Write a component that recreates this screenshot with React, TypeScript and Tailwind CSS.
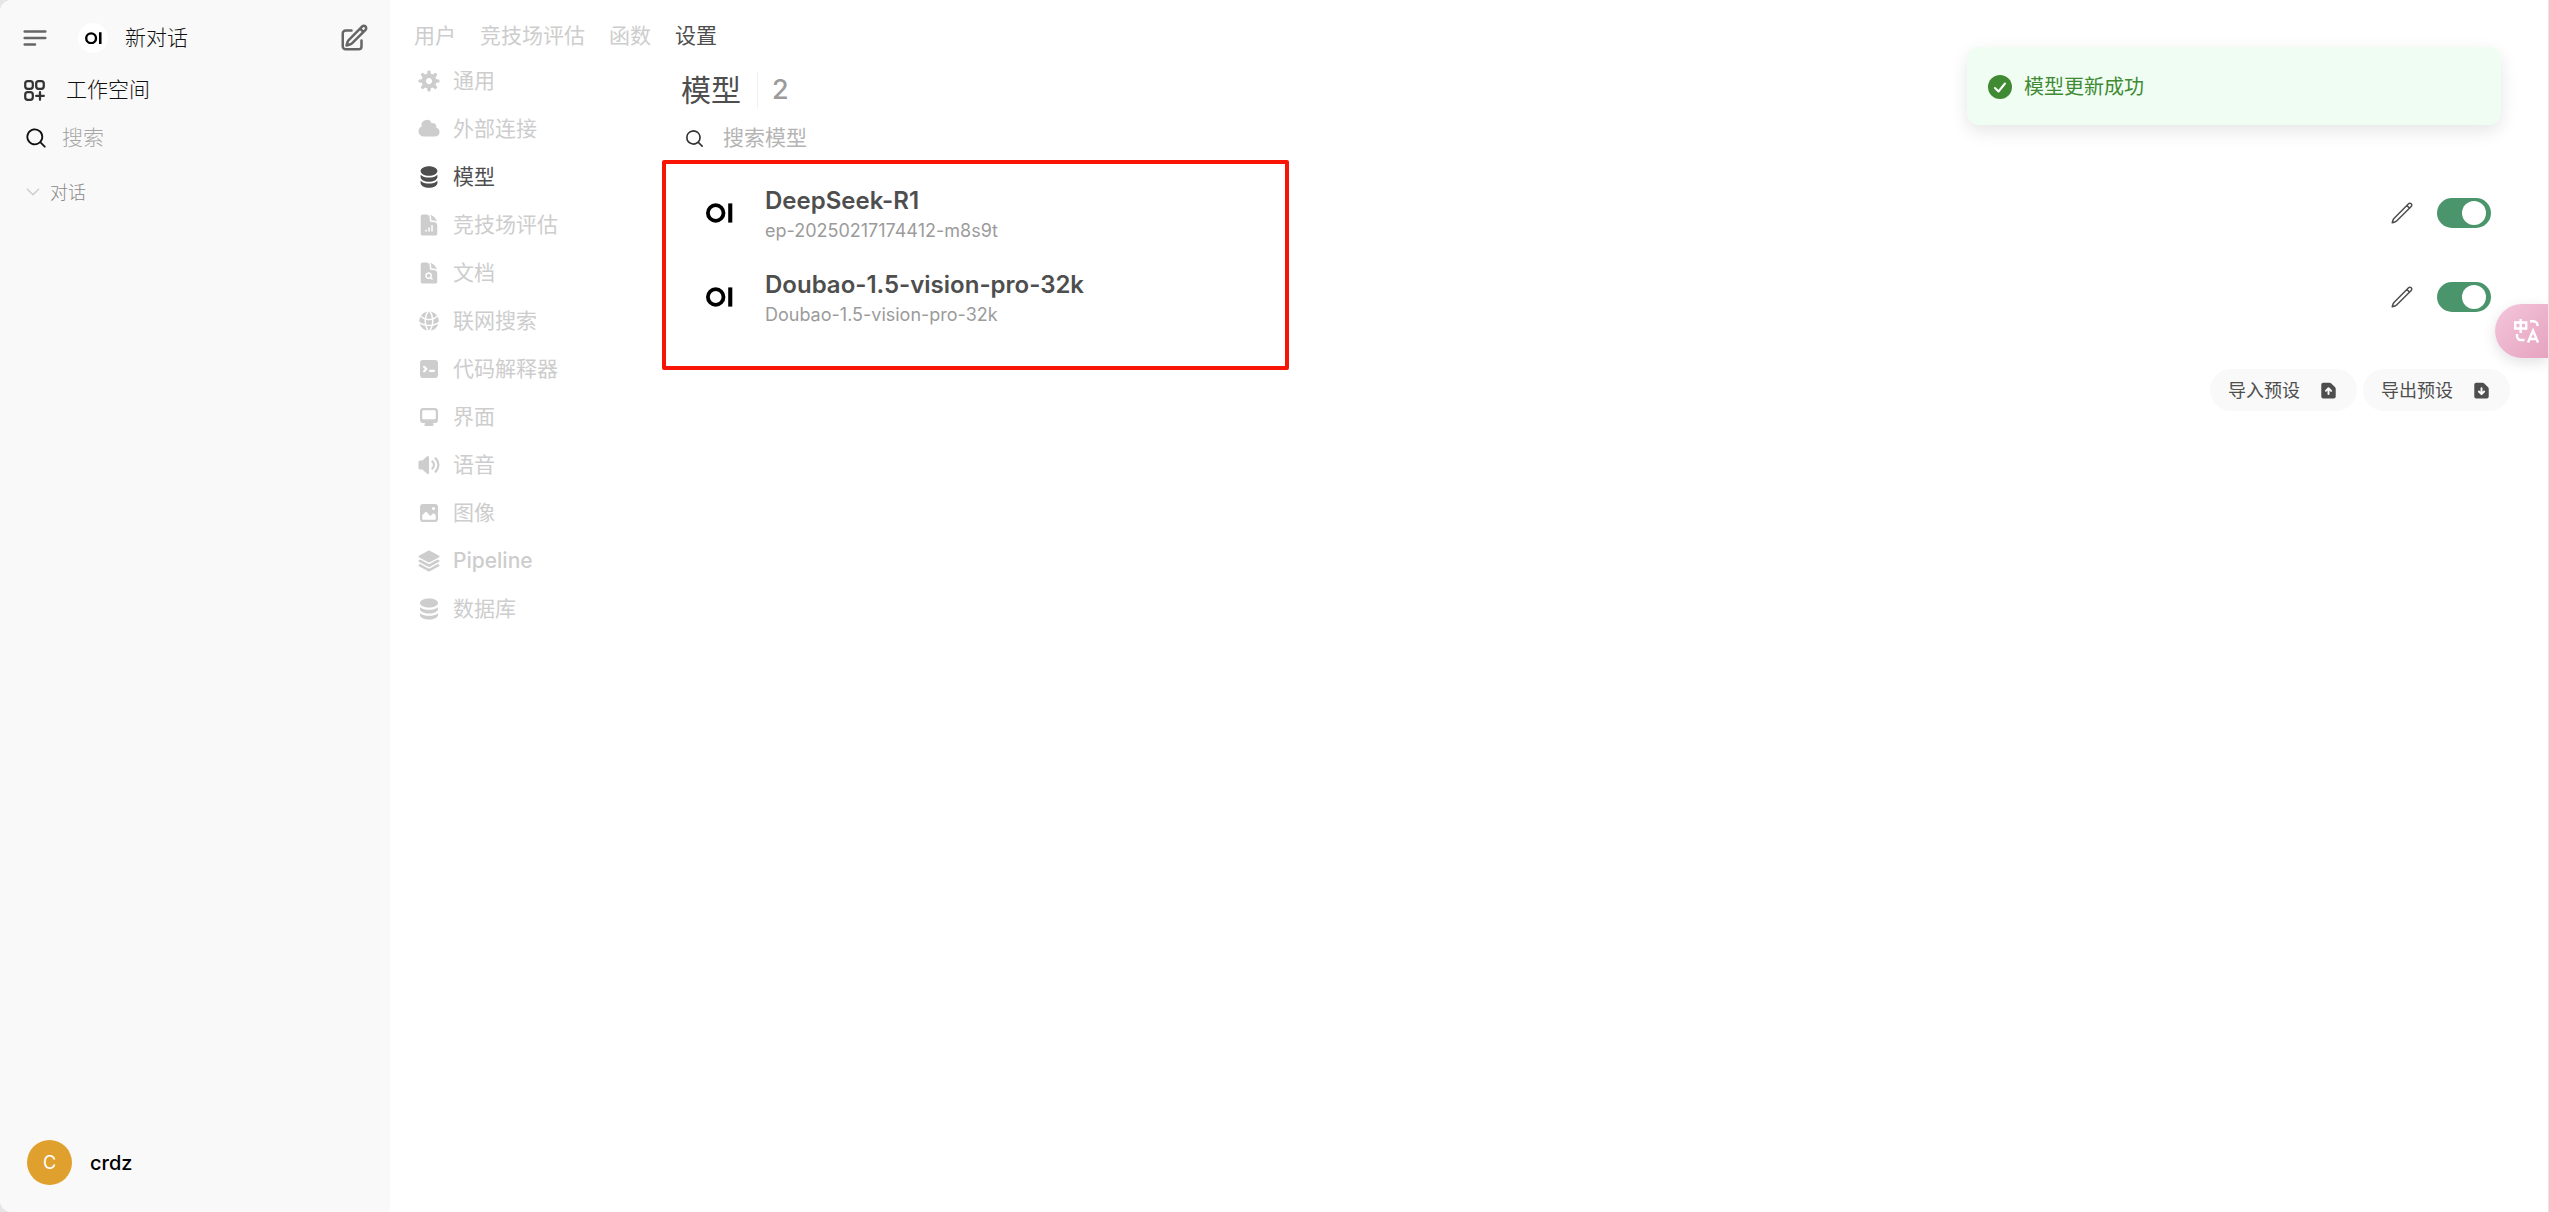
import { useState } from "react";
import clsx from "clsx";
import type { IconType } from "react-icons";
import {
  HiDocumentChartBar,
  HiDocumentMagnifyingGlass,
  HiGlobeAlt,
  HiMiniCircleStack,
  HiMiniMagnifyingGlass,
  HiOutlineBars3BottomLeft,
  HiOutlineChevronDown,
  HiOutlinePencil,
  HiOutlinePencilSquare,
  HiOutlineSquaresPlus,
  HiSquare3Stack3D,
} from "react-icons/hi2";

const PATHS = {
  cog: "M6.955 1.45A.5.5 0 0 1 7.452 1h1.096a.5.5 0 0 1 .497.45l.17 1.699c.484.12.94.312 1.356.562l1.321-1.081a.5.5 0 0 1 .67.033l.774.775a.5.5 0 0 1 .034.67l-1.08 1.32c.25.417.44.873.561 1.357l1.699.17a.5.5 0 0 1 .45.497v1.096a.5.5 0 0 1-.45.497l-1.699.17c-.12.484-.312.94-.562 1.356l1.082 1.322a.5.5 0 0 1-.034.67l-.774.774a.5.5 0 0 1-.67.033l-1.322-1.08c-.416.25-.872.44-1.356.561l-.17 1.699a.5.5 0 0 1-.497.45H7.452a.5.5 0 0 1-.497-.45l-.17-1.699a4.973 4.973 0 0 1-1.356-.562L4.108 13.37a.5.5 0 0 1-.67-.033l-.774-.775a.5.5 0 0 1-.034-.67l1.08-1.32a4.971 4.971 0 0 1-.561-1.357l-1.699-.17A.5.5 0 0 1 1 8.548V7.452a.5.5 0 0 1 .45-.497l1.699-.17c.12-.484.312-.94.562-1.356L2.629 4.107a.5.5 0 0 1 .034-.67l.774-.774a.5.5 0 0 1 .67-.033L5.43 3.71a4.97 4.97 0 0 1 1.356-.561l.17-1.699ZM6 8c0 .538.212 1.026.558 1.385l.057.057a2 2 0 0 0 2.828-2.828l-.058-.056A2 2 0 0 0 6 8Z",
  cloud:
    "M1 9.5A3.5 3.5 0 0 0 4.5 13H12a3 3 0 0 0 .917-5.857 2.503 2.503 0 0 0-3.198-3.019 3.5 3.5 0 0 0-6.628 2.171A3.5 3.5 0 0 0 1 9.5Z",
  stack:
    "M8 7c3.314 0 6-1.343 6-3s-2.686-3-6-3-6 1.343-6 3 2.686 3 6 3Z M8 8.5c1.84 0 3.579-.37 4.914-1.037A6.33 6.33 0 0 0 14 6.78V8c0 1.657-2.686 3-6 3S2 9.657 2 8V6.78c.346.273.72.5 1.087.683C4.42 8.131 6.16 8.5 8 8.5Z M8 12.5c1.84 0 3.579-.37 4.914-1.037.366-.183.74-.41 1.086-.684V12c0 1.657-2.686 3-6 3s-6-1.343-6-3v-1.22c.346.273.72.5 1.087.683C4.42 12.131 6.16 12.5 8 12.5Z",
  terminal:
    "M2 4a2 2 0 0 1 2-2h8a2 2 0 0 1 2 2v8a2 2 0 0 1-2 2H4a2 2 0 0 1-2-2V4Zm2.22 1.97a.75.75 0 0 0 0 1.06l.97.97-.97.97a.75.75 0 1 0 1.06 1.06l1.5-1.5a.75.75 0 0 0 0-1.06l-1.5-1.5a.75.75 0 0 0-1.06 0ZM8.75 8.5a.75.75 0 0 0 0 1.5h2.5a.75.75 0 0 0 0-1.5h-2.5Z",
  desktop:
    "M2 4.25A2.25 2.25 0 0 1 4.25 2h7.5A2.25 2.25 0 0 1 14 4.25v5.5A2.25 2.25 0 0 1 11.75 12h-1.312c.1.128.21.248.328.36a.75.75 0 0 1 .234.545v.345a.75.75 0 0 1-.75.75h-4.5a.75.75 0 0 1-.75-.75v-.345a.75.75 0 0 1 .234-.545c.118-.111.228-.232.328-.36H4.25A2.25 2.25 0 0 1 2 9.75v-5.5Zm2.25-.75a.75.75 0 0 0-.75.75v4.5c0 .414.336.75.75.75h7.5a.75.75 0 0 0 .75-.75v-4.5a.75.75 0 0 0-.75-.75h-7.5Z",
  speaker:
    "M7.557 2.066A.75.75 0 0 1 8 2.75v10.5a.75.75 0 0 1-1.248.56L3.59 11H2a1 1 0 0 1-1-1V6a1 1 0 0 1 1-1h1.59l3.162-2.81a.75.75 0 0 1 .805-.124ZM12.95 3.05a.75.75 0 1 0-1.06 1.06 5.5 5.5 0 0 1 0 7.78.75.75 0 1 0 1.06 1.06 7 7 0 0 0 0-9.9Z M10.828 5.172a.75.75 0 1 0-1.06 1.06 2.5 2.5 0 0 1 0 3.536.75.75 0 1 0 1.06 1.06 4 4 0 0 0 0-5.656Z",
  photo:
    "M2 4a2 2 0 0 1 2-2h8a2 2 0 0 1 2 2v8a2 2 0 0 1-2 2H4a2 2 0 0 1-2-2V4Zm10.5 5.707a.5.5 0 0 0-.146-.353l-1-1a.5.5 0 0 0-.708 0L9.354 9.646a.5.5 0 0 1-.708 0L6.354 7.354a.5.5 0 0 0-.708 0l-2 2a.5.5 0 0 0-.146.353V12a.5.5 0 0 0 .5.5h8a.5.5 0 0 0 .5-.5V9.707ZM12 5a1 1 0 1 1-2 0 1 1 0 0 1 2 0Z",
  docUp:
    "M4 2a1.5 1.5 0 0 0-1.5 1.5v9A1.5 1.5 0 0 0 4 14h8a1.5 1.5 0 0 0 1.5-1.5V6.621a1.5 1.5 0 0 0-.44-1.06L9.94 2.439A1.5 1.5 0 0 0 8.878 2H4Zm4 9.5a.75.75 0 0 1-.75-.75V8.06l-.72.72a.75.75 0 0 1-1.06-1.06l2-2a.75.75 0 0 1 1.06 0l2 2a.75.75 0 1 1-1.06 1.06l-.72-.72v2.69a.75.75 0 0 1-.75.75Z",
  docDown:
    "M4 2a1.5 1.5 0 0 0-1.5 1.5v9A1.5 1.5 0 0 0 4 14h8a1.5 1.5 0 0 0 1.5-1.5V6.621a1.5 1.5 0 0 0-.44-1.06L9.94 2.439A1.5 1.5 0 0 0 8.878 2H4Zm4 3.5a.75.75 0 0 1 .75.75v2.69l.72-.72a.75.75 0 1 1 1.06 1.06l-2 2a.75.75 0 0 1-1.06 0l-2-2a.75.75 0 0 1 1.06-1.06l.72.72V6.25A.75.75 0 0 1 8 5.5Z",
};

type PathName = keyof typeof PATHS;

const MicroIcon = ({ name, className }: { name: PathName; className?: string }) => (
  <svg viewBox="0 0 16 16" fill="currentColor" className={className} aria-hidden="true">
    <path fillRule="evenodd" clipRule="evenodd" d={PATHS[name]} />
  </svg>
);

const Logo = ({ className }: { className?: string }) => (
  <svg viewBox="0 0 27 20" fill="none" className={className} aria-hidden="true">
    <circle cx="9.7" cy="10" r="7.8" stroke="black" strokeWidth="3.8" />
    <path d="M22.2 .4h4.100v19.200h-4.100z" fill="black" />
  </svg>
);

type NavItem = { label: string; Icon?: IconType; micro?: PathName };

const navItems: NavItem[] = [
  { label: "通用", micro: "cog" },
  { label: "外部连接", micro: "cloud" },
  { label: "模型", Icon: HiMiniCircleStack },
  { label: "竞技场评估", Icon: HiDocumentChartBar },
  { label: "文档", Icon: HiDocumentMagnifyingGlass },
  { label: "联网搜索", Icon: HiGlobeAlt },
  { label: "代码解释器", micro: "terminal" },
  { label: "界面", micro: "desktop" },
  { label: "语音", micro: "speaker" },
  { label: "图像", micro: "photo" },
  { label: "Pipeline", Icon: HiSquare3Stack3D },
  { label: "数据库", micro: "stack" },
];

const tabs = ["用户", "竞技场评估", "函数", "设置"];

const models = [
  { name: "DeepSeek-R1", id: "ep-20250217174412-m8s9t" },
  { name: "Doubao-1.5-vision-pro-32k", id: "Doubao-1.5-vision-pro-32k" },
];

const Sidebar = () => (
  <aside className="flex w-[390px] shrink-0 flex-col bg-[#f9f9f9] text-[21px] font-light text-[#111]">
    <div className="flex h-[76px] items-center pl-5 pr-[21px]">
      <button aria-label="菜单" className="text-[#666]">
        <HiOutlineBars3BottomLeft className="size-[30px]" strokeWidth={2} />
      </button>
      <a href="#new" className="ml-7 flex flex-1 items-center">
        <span className="flex size-[30px] items-center justify-center rounded-full bg-white">
          <Logo className="w-[17px]" />
        </span>
        <span className="ml-[17px]">新对话</span>
      </a>
      <button aria-label="编辑" className="text-[#666]">
        <HiOutlinePencilSquare className="size-[30px]" strokeWidth={2} />
      </button>
    </div>
    <a href="#workspace" className="flex h-7 items-center pl-[21px]">
      <HiOutlineSquaresPlus className="size-[27px] text-[#333]" strokeWidth={2} />
      <span className="ml-[18px]">工作空间</span>
    </a>
    <label className="mt-5 flex h-7 items-center pl-6">
      <HiMiniMagnifyingGlass className="size-6" />
      <input
        aria-label="搜索"
        placeholder="搜索"
        className="ml-[14px] w-64 bg-transparent outline-none placeholder:text-[#a6a6a6]"
      />
    </label>
    <button className="mt-[26px] flex h-7 items-center pl-6 text-[18px] text-[#888]">
      <HiOutlineChevronDown className="size-[18px] text-[#cdcdcd]" strokeWidth={2} />
      <span className="ml-2">对话</span>
    </button>
    <button className="mb-[27px] mt-auto flex items-center gap-[18px] pl-[27px] text-[20px] font-medium text-black">
      <span className="flex size-[45px] items-center justify-center rounded-full bg-[#e0a02e] text-[18px] font-normal text-white">
        C
      </span>
      crdz
    </button>
  </aside>
);

const SettingsNav = () => (
  <nav className="flex w-[264px] shrink-0 flex-col">
    {navItems.map(({ label, Icon, micro }) => (
      <button
        key={label}
        className={clsx(
          "flex h-12 items-center gap-3 text-[21px]",
          label === "Pipeline" ? "font-medium" : "font-normal",
          label === "模型" ? "text-[#4e4e4e]" : "text-[#cdcdcd]"
        )}
      >
        {Icon && <Icon className="size-6" />}
        {micro && <MicroIcon name={micro} className="size-6" />}
        <span>{label}</span>
      </button>
    ))}
  </nav>
);

const ModelRow = ({ name, id }: { name: string; id: string }) => {
  const [enabled, setEnabled] = useState(true);
  return (
    <li className="flex h-[84px] items-center pr-[19px]">
      <a href="#model" className="flex flex-1 items-center">
        <span className="ml-4 flex size-11 items-center justify-center">
          <Logo className="w-[27px]" />
        </span>
        <span className="ml-6 flex flex-col pt-1">
          <span className="text-[24px] font-semibold leading-8 text-[#4e4e4e]">{name}</span>
          <span className="text-[18px] leading-7 text-[#9b9b9b]">{id}</span>
        </span>
      </a>
      <button aria-label="编辑模型" className="mr-[23px] text-[#4e4e4e]">
        <HiOutlinePencil className="size-6" />
      </button>
      <label
        className={clsx(
          "relative flex h-[30px] w-[54px] cursor-pointer items-center rounded-full p-[5px]",
          enabled ? "justify-end bg-[#4a956b]" : "justify-start bg-gray-200"
        )}
      >
        <input
          type="checkbox"
          role="switch"
          aria-label={name}
          checked={enabled}
          onChange={() => setEnabled(!enabled)}
          className="absolute inset-0 cursor-pointer appearance-none"
        />
        <span className="size-6 rounded-full bg-white" />
      </label>
    </li>
  );
};

const PresetButton = ({ label, icon }: { label: string; icon: PathName }) => (
  <button className="flex h-[42px] items-center gap-[18px] rounded-full bg-[#f9f9f9] px-[18px] text-[18px] text-[#4e4e4e]">
    {label}
    <MicroIcon name={icon} className="size-[21px]" />
  </button>
);

const Toast = () => (
  <div
    role="status"
    className="absolute right-[47px] top-[47px] flex h-[78px] w-[534px] items-center rounded-xl bg-[#effdf3] pl-[21px] pt-px text-[20px] text-[#3f8a32] shadow-[0_6px_18px_rgba(0,0,0,0.1)]"
  >
    <svg viewBox="0 0 24 24" className="size-6" aria-hidden="true">
      <circle cx="12" cy="12" r="12" fill="#3f8a32" />
      <path
        d="m7 13 3.500 3.500L17 8.500"
        fill="none"
        stroke="white"
        strokeWidth="2"
        strokeLinecap="round"
        strokeLinejoin="round"
      />
    </svg>
    <span className="ml-3">模型更新成功</span>
  </div>
);

const TranslateButton = () => (
  <button
    aria-label="翻译"
    className="absolute right-0 top-[304px] flex h-[54px] w-[53px] items-center rounded-l-full bg-linear-to-br from-[#f3c6dc] to-[#e6a3c0] pl-[19px] shadow-[0_4px_14px_rgba(0,0,0,0.12)]"
  >
    <svg viewBox="0 0 26 26" className="size-[26px]" fill="none" stroke="white" strokeWidth="2.4">
      <path d="M1.2 4.500h11v6h-11zM6.700 1v14" />
      <path d="M16 3.200h3.500a4 4 0 0 1 4 4V8" />
      <path d="M3 16v2a4 4 0 0 0 4 4h3.500" />
      <path d="m14 24.500 5-12 5 12M15.600 21h6.800" />
    </svg>
  </button>
);

const App = () => {
  return (
    <div className="min-h-screen bg-[#e6e6e6] pr-px font-['Inter','Noto_Sans_CJK_SC',sans-serif]">
      <div className="relative flex min-h-screen overflow-hidden rounded-l-xl bg-white">
        <Sidebar />
        <main className="flex flex-1 flex-col">
          <div className="flex gap-6 pb-[5px] pl-6 pt-5 text-[21px] leading-8">
            {tabs.map((tab) => (
              <a
                key={tab}
                href="#tab"
                className={tab === "设置" ? "text-[#4e4e4e]" : "text-[#cdcdcd]"}
              >
                {tab}
              </a>
            ))}
          </div>
          <div className="flex pl-[27px] pr-[38px]">
            <SettingsNav />
            <section className="flex flex-1 flex-col pt-3">
              <h1 className="flex h-[42px] items-center text-[30px] font-normal text-[#4e4e4e]">
                模型
                <span className="ml-4 mr-[14px] h-9 w-px bg-[#f0f0f0]" />
                <span className="text-[27px] font-medium text-[#9b9b9b]">2</span>
              </h1>
              <label className="flex h-[54px] items-center pl-[3px] text-[21px] text-[#333]">
                <HiMiniMagnifyingGlass className="size-[21px]" />
                <input
                  aria-label="搜索模型"
                  placeholder="搜索模型"
                  className="ml-[18px] flex-1 bg-transparent outline-none placeholder:text-[#b4b4b4]"
                />
              </label>
              <div className="relative pt-[6px]">
                <ul>
                  {models.map((model) => (
                    <ModelRow key={model.name} {...model} />
                  ))}
                </ul>
                <div className="pointer-events-none absolute -left-[19px] -top-[5px] h-[210px] w-[627px] rounded-xs border-4 border-[#f81505]" />
              </div>
              <div className="mt-[30px] flex justify-end gap-[6px]">
                <PresetButton label="导入预设" icon="docUp" />
                <PresetButton label="导出预设" icon="docDown" />
              </div>
            </section>
          </div>
        </main>
        <Toast />
        <TranslateButton />
      </div>
    </div>
  );
};

export default App;
